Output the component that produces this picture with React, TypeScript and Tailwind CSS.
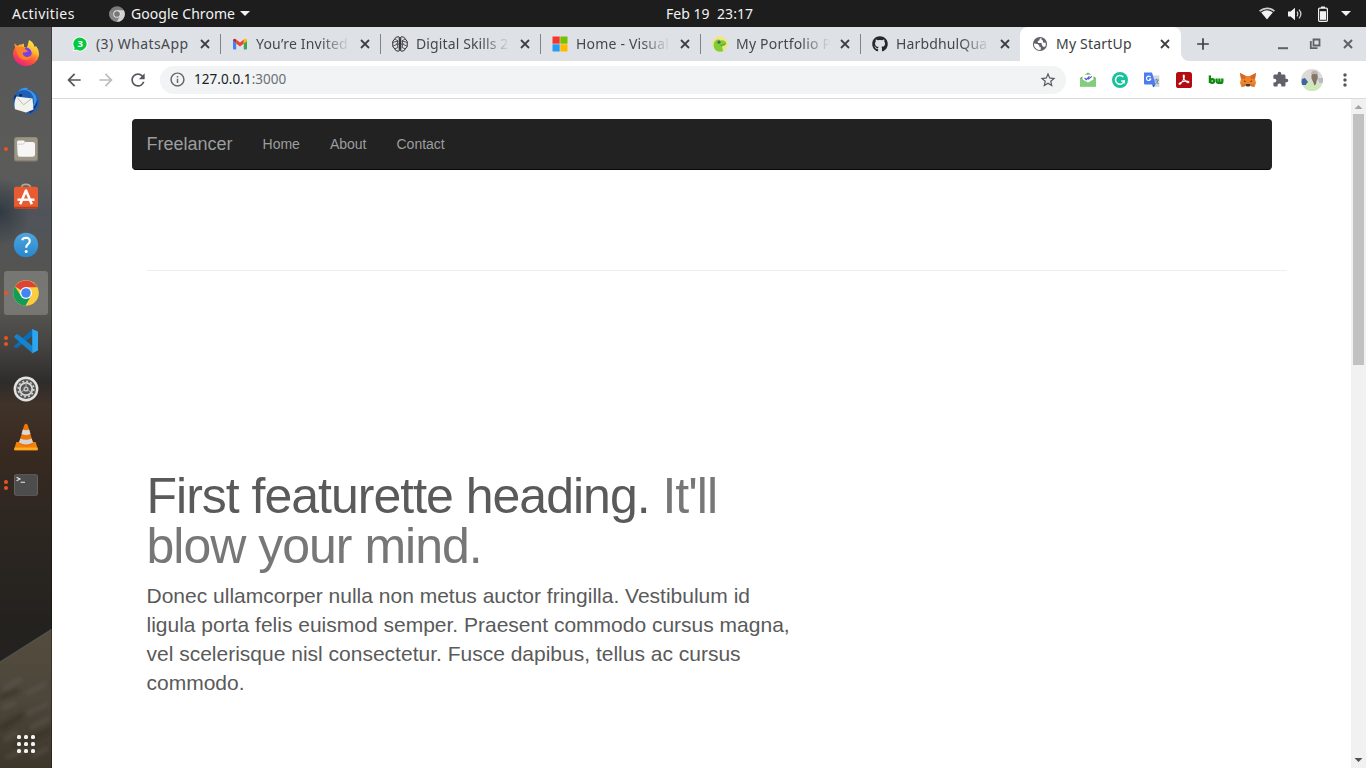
import type { ReactNode } from "react";
import {
  MdArrowBack,
  MdArrowForward,
  MdRefresh,
  MdInfoOutline,
  MdStarBorder,
  MdExtension,
  MdMoreVert,
  MdAdd,
} from "react-icons/md";
import { FaGithub } from "react-icons/fa";

const svg = "block shrink-0";

function ChromeMark({ size }: { size: number }) {
  return (
    <svg className={svg} width={size} height={size} viewBox="0 0 26 26">
      <circle cx="13" cy="13" r="12.8" fill="#fdcd40" />
      <path d="M13 13L2 6.5A12.8 12.8 0 0 1 24.1 7.2L13 7.2Z" fill="#dc4437" />
      <path d="M2 6.5L8 16L18 16L12.4 25.8A12.8 12.8 0 0 1 2 6.5Z" fill="#109d58" />
      <circle cx="13" cy="13" r="6" fill="#fff" />
      <circle cx="13" cy="13" r="4.8" fill="#4285f4" />
    </svg>
  );
}

function ChromeSymbolic() {
  return (
    <svg className={svg} width="16" height="16" viewBox="0 0 26 26">
      <circle cx="13" cy="13" r="12.6" fill="#7b7b7b" />
      <path d="M13 7H24.2A12.6 12.6 0 0 1 12.4 25.6L18.6 15.6Z" fill="#d2d2d2" />
      <path d="M2 6.8L8 15.6L17 16L12.4 25.6A12.6 12.6 0 0 1 2 6.8Z" fill="#868686" />
      <circle cx="13" cy="13" r="6.2" fill="#e4e4e4" />
      <circle cx="13" cy="13" r="4.6" fill="#777" />
    </svg>
  );
}

function CloseMark() {
  return (
    <svg className="ml-[8px] block shrink-0" width="10" height="10" viewBox="0 0 10 10">
      <path d="M1 1L9 9M9 1L1 9" fill="none" stroke="#3c4043" strokeWidth="1.8" />
    </svg>
  );
}

function Firefox() {
  return (
    <svg className={svg} width="28" height="28" viewBox="0 0 28 28">
      <defs>
        <linearGradient id="ff" x1=".8" y1="0" x2=".25" y2="1">
          <stop offset="0" stopColor="#fff44f" />
          <stop offset=".35" stopColor="#ffb62e" />
          <stop offset=".62" stopColor="#ff5a35" />
          <stop offset="1" stopColor="#e9178b" />
        </linearGradient>
      </defs>
      <path
        d="M2.4 4.2L5.6 7Q7 5.4 9.6 5.6L12 4.4L12 7.8L15 9L17 1Q21.6 3.2 22.6 8L24 7Q27.8 12 26.8 17A13 12.4 0 0 1 1.2 17Q.4 12 3 9Z"
        fill="url(#ff)"
      />
      <circle cx="14.3" cy="14" r="5.4" fill="#7542e5" />
      <path d="M4 9Q8 7 12 8L14 11Q16 11.7 15.6 12.8Q13 13.6 11 13.4Q10 16 14 18Q18 18.5 20 15Q19.6 21 14 21Q7 21 5 14Z" fill="#ff812b" />
      <path d="M14 8Q18.8 8 20 13.5Q20.6 10 18.6 7Z" fill="#ffc23e" />
    </svg>
  );
}

function Thunderbird() {
  return (
    <svg className={svg} width="28" height="28" viewBox="0 0 28 28">
      <path d="M1 14Q1 9 5 5Q9 0 16 1Q17 2 15 2.6Q24 3 27 11Q28.6 18 25.5 22Q22 27.5 14 27.4Q16 26 16 24L3 21Q1 18 1 14Z" fill="#1f5fb4" />
      <path d="M6 5Q11 1 18 5Q22 9 22 15L20 22Q26 17 24 9Q20 3 15 2.6L16 1Q9 0 6 5Z" fill="#3f92df" />
      <path d="M25.5 13Q26 21 18 26.4L17 24L23 18Z" fill="#17347d" />
      <path d="M4.5 9.6L20.5 11.5L21.5 22.4L14 25.4L3 22.2Q1.4 16 4.5 9.6Z" fill="#f3f3ee" />
      <path d="M5.5 11L11.6 17.8L19.2 12" fill="none" stroke="#bcbcb8" strokeWidth="1" />
      <circle cx="8.6" cy="8.3" r="1.4" fill="#102a57" />
      <path d="M5 8L1.5 13L2.6 8.4Z" fill="#1a2440" />
    </svg>
  );
}

function Files() {
  return (
    <svg className={svg} width="26" height="26" viewBox="0 0 26 26">
      <rect x="1" y="1" width="24" height="24.4" rx="2.5" fill="#857f6f" />
      <rect x="1.8" y="1.6" width="22.4" height="22.6" rx="2" fill="#9c9686" />
      <path d="M4 6.2Q4 4.6 5.5 4.6H10Q11.6 4.6 11.8 6H19.5Q22 6 22 8V18.5Q22 20.7 19.5 20.7H7Q4.6 20.7 4.6 18.5Z" fill="#f7f6f4" />
      <path d="M4.4 8.2H9.4Q11.2 8.2 12 6.2" fill="none" stroke="#cdc9c1" strokeWidth=".9" />
    </svg>
  );
}

function Software() {
  return (
    <svg className="-mt-[2px] block shrink-0" width="26" height="28" viewBox="0 0 26 28">
      <path d="M8.5 6Q8.5 2.4 13 2.4Q17.5 2.4 17.5 6" fill="none" stroke="#b9a78f" strokeWidth="1.6" />
      <rect x="1" y="4.8" width="24" height="21.6" rx="2" fill="#e95b30" />
      <rect x="1" y="24.8" width="24" height="1.6" rx=".8" fill="#b83e18" />
      <path d="M7.2 22.2L13 8.5L18.8 22.2" fill="none" stroke="#fff" strokeWidth="2.6" strokeLinejoin="round" />
      <path d="M4.5 17.7H21.5" stroke="#fff" strokeWidth="2.4" />
    </svg>
  );
}

function Help() {
  return (
    <svg className={svg} width="26" height="26" viewBox="0 0 26 26">
      <defs>
        <linearGradient id="help" x1="0" y1="0" x2="0" y2="1">
          <stop offset="0" stopColor="#4fa6df" />
          <stop offset="1" stopColor="#2786cc" />
        </linearGradient>
      </defs>
      <circle cx="13" cy="13" r="12.2" fill="url(#help)" />
      <path d="M9.2 8.2Q9.8 5.8 13 5.8Q16.8 6 16.8 9Q16.8 11 14.8 12.4Q13.2 13.6 13.2 15.8" fill="none" stroke="#fff" strokeWidth="2.1" />
      <circle cx="13.2" cy="19.4" r="1.5" fill="#fff" />
    </svg>
  );
}

function Code() {
  return (
    <svg className={svg} width="26" height="26" viewBox="0 0 26 26">
      <path d="M1.2 17.7L19.2 1.2V8L4 19.9Q2.6 20.4 1.2 18.8Z" fill="#0b6db5" />
      <path d="M1.2 8.2L3.6 6.2Q4.3 6 5 6.6L19.2 17.8V25L1.2 9.2Z" fill="#1484ce" />
      <path d="M18.6.8L25 3.6V22.4L18.6 25.4Q19.2 25 19.2 24V2.2Q19.2 1.2 18.6.8Z" fill="#2aa7f0" />
    </svg>
  );
}

function Settings() {
  return (
    <svg className={svg} width="26" height="26" viewBox="0 0 26 26">
      <circle cx="13" cy="13" r="12.4" fill="#e3e3e2" />
      <circle cx="13" cy="13" r="10" fill="#545454" />
      <circle cx="13" cy="13" r="7.8" fill="none" stroke="#cfcfcf" strokeWidth="1.6" strokeDasharray="2 2.08" />
      <circle cx="13" cy="13" r="6.2" fill="none" stroke="#d8d8d8" strokeWidth="1.8" />
      <circle cx="13" cy="13" r="2.6" fill="#c4c4c4" />
      <path d="M13 7V11M7.8 16L11 14.2M18.2 16L15 14.2" stroke="#a4a4a4" strokeWidth="1.2" />
      <circle cx="13" cy="13" r="1.1" fill="#555" />
    </svg>
  );
}

function Vlc() {
  return (
    <svg className={svg} width="26" height="28" viewBox="0 0 26 28">
      <path d="M3.4 19H22.6L25 26.5Q25 27.5 24 27.5H2Q1 27.5 1 26.5Z" fill="#f08109" />
      <path d="M1.4 24.6H24.6V26.8H1.4Z" fill="#ffae27" />
      <path d="M11.3 2Q13 -.4 14.7 2L20.4 21Q13 25.8 5.6 21Z" fill="#ef7507" />
      <path d="M9.8 6.5Q13 8 16.2 6.5L17.5 11Q13 13 8.5 11Z" fill="#d9d9d9" />
      <path d="M7.3 15.5Q13 18.2 18.7 15.5L20 19.6Q13 23.6 6 19.6Z" fill="#d4d4d4" />
    </svg>
  );
}

function Terminal() {
  return (
    <svg className={svg} width="26" height="26" viewBox="0 0 26 26">
      <rect x="1" y="2.2" width="24" height="21.6" rx="2.4" fill="#656565" />
      <rect x="1.9" y="3.1" width="22.2" height="19.8" rx="1.6" fill="#4d4d4d" />
      <path d="M3.6 5.2L7 7L3.6 8.8M7.6 10.2H12" fill="none" stroke="#e9e9e9" strokeWidth="1.1" />
    </svg>
  );
}

const dock: { icon: ReactNode; dots: number; active?: boolean }[] = [
  { icon: <Firefox />, dots: 0 },
  { icon: <Thunderbird />, dots: 0 },
  { icon: <Files />, dots: 1 },
  { icon: <Software />, dots: 0 },
  { icon: <Help />, dots: 0 },
  { icon: <ChromeMark size={26} />, dots: 1, active: true },
  { icon: <Code />, dots: 2 },
  { icon: <Settings />, dots: 0 },
  { icon: <Vlc />, dots: 0 },
  { icon: <Terminal />, dots: 2 },
];

function DockBackdrop() {
  return (
    <svg className="absolute inset-0" width="52" height="741" viewBox="0 27 52 741" preserveAspectRatio="none">
      <defs>
        <linearGradient id="wall" x1="0" y1="0" x2="0" y2="1">
          <stop offset="0" stopColor="#585858" />
          <stop offset=".2" stopColor="#5b5b5a" />
          <stop offset=".25" stopColor="#50545a" />
          <stop offset=".31" stopColor="#535453" />
          <stop offset=".38" stopColor="#575550" />
          <stop offset=".43" stopColor="#454442" />
          <stop offset=".48" stopColor="#2e2c2a" />
          <stop offset=".51" stopColor="#40332a" />
          <stop offset=".57" stopColor="#382a20" />
          <stop offset=".66" stopColor="#2e2721" />
          <stop offset=".8" stopColor="#24221f" />
          <stop offset="1" stopColor="#222" />
        </linearGradient>
        <linearGradient id="road" x1="0" y1="0" x2="0" y2="1">
          <stop offset="0" stopColor="#544d3e" />
          <stop offset=".5" stopColor="#4c463b" />
          <stop offset="1" stopColor="#3d362b" />
        </linearGradient>
        <radialGradient id="shade">
          <stop offset="0" stopColor="#27323a" stopOpacity=".75" />
          <stop offset="1" stopColor="#27323a" stopOpacity="0" />
        </radialGradient>
        <filter id="soft">
          <feGaussianBlur stdDeviation="2" />
        </filter>
      </defs>
      <rect y="27" width="52" height="741" fill="url(#wall)" />
      <ellipse cx="0" cy="212" rx="30" ry="34" fill="url(#shade)" />
      <path d="M0 662L52 629V768H0Z" fill="url(#road)" />
      <path d="M0 662L52 629" stroke="#5f5e59" strokeWidth="1.2" opacity=".6" />
      <g filter="url(#soft)">
        <path d="M4 688L22 679M26 694L46 684M2 708L16 703M22 716L48 704M4 740L18 732M30 728L50 718M6 758L24 750M32 757L48 748" stroke="#6a6763" strokeWidth="3" opacity=".5" />
        <path d="M0 729L26 713M14 747L50 730M0 698L18 690" stroke="#2f281f" strokeWidth="4" opacity=".6" />
      </g>
      <rect x="51" y="27" width="1" height="741" fill="#000" opacity=".3" />
    </svg>
  );
}

function Dock() {
  return (
    <aside className="relative w-[52px] shrink-0 overflow-hidden bg-[#444]">
      <DockBackdrop />
      <div className="relative flex h-full flex-col pt-[2px]">
        {dock.map((d, i) => (
          <div key={i} className="relative flex h-12 items-center justify-center">
            <div
              className={
                d.active
                  ? "flex h-11 w-11 items-center justify-center rounded-[3px] bg-white/20"
                  : "flex h-11 w-11 items-center justify-center"
              }
            >
              {d.icon}
            </div>
            <div className="absolute left-1 flex h-full flex-col justify-center gap-[2px]">
              {Array.from({ length: d.dots }, (_, k) => (
                <span key={k} className="h-1 w-1 rounded-full bg-[#e95420]" />
              ))}
            </div>
          </div>
        ))}
        <div className="mt-auto mb-[15px] grid grid-cols-3 gap-[3px] self-center">
          {Array.from({ length: 9 }, (_, k) => (
            <span key={k} className="h-1 w-1 rounded-[1.5px] bg-[#f2f2f0]" />
          ))}
        </div>
      </div>
    </aside>
  );
}

function TopBar() {
  return (
    <header className="relative flex h-[27px] shrink-0 items-center justify-between bg-[#1d1d1d] pl-3 pr-[15px] text-[14px] text-[#f2f2f2]">
      <div className="flex items-center">
        <span className="w-[97px] tracking-[0.45px]">Activities</span>
        <ChromeSymbolic />
        <span className="ml-[6px] w-[105px] whitespace-nowrap tracking-[0.05px]">Google Chrome</span>
        <svg className="ml-1" width="10" height="5" viewBox="0 0 10 5">
          <path d="M0 0H10L5 5Z" fill="#f2f2f2" />
        </svg>
      </div>
      <div className="flex items-center">
        <svg className={svg} width="16" height="13" viewBox="0 0 16 13">
          <path d="M0 3.4Q8 -2.6 16 3.4L14.9 4.8Q8 -.2 1.1 4.8Z" fill="#d0d0d0" />
          <path d="M2.2 5.4Q8 1 13.8 5.4L8 12.4Z" fill="#f2f2f2" />
        </svg>
        <svg className="ml-[13px]" width="15" height="14" viewBox="0 0 15 14">
          <path d="M0 4.6H2.6L7 .8V13.2L2.6 9.4H0Z" fill="#f2f2f2" />
          <path d="M9 4.6Q10.6 7 9 9.4M11 2.6Q14.8 7 11 11.4" fill="none" stroke="#d8d8d8" strokeWidth="1.2" />
        </svg>
        <svg className="ml-[15px]" width="10" height="16" viewBox="0 0 10 16">
          <path d="M3 .5H7V2H3Z" fill="#f2f2f2" />
          <rect x=".6" y="2.1" width="8.8" height="13.2" rx="1" fill="none" stroke="#f2f2f2" strokeWidth="1.2" />
          <rect x="2" y="5.2" width="6" height="8.6" fill="#f2f2f2" />
        </svg>
        <svg className="ml-[13px]" width="10" height="5" viewBox="0 0 10 5">
          <path d="M0 0H10L5 5Z" fill="#f2f2f2" />
        </svg>
      </div>
      <div className="pointer-events-none absolute inset-x-0 left-[53px] flex justify-center">
        <span className="whitespace-pre tracking-[0.05px]">{"Feb 19  23:17"}</span>
      </div>
    </header>
  );
}

const favicons = {
  whatsapp: (
    <svg className={svg} width="16" height="16" viewBox="0 0 16 16">
      <path d="M8 .5A7.5 7.5 0 1 1 4.4 14.6L.6 15.6L1.7 12A7.5 7.5 0 0 1 8 .5Z" fill="#fff" />
      <path d="M8 1.4A6.6 6.6 0 1 1 4.5 13.6L2 14.3L2.7 12A6.6 6.6 0 0 1 8 1.4Z" fill="#05c93f" />
      <text x="8.1" y="11.4" fontSize="9.5" fontWeight="700" fill="#fff" textAnchor="middle">3</text>
    </svg>
  ),
  gmail: (
    <svg className={svg} width="16" height="16" viewBox="0 0 16 16">
      <path d="M1 4V12.6Q1 13.6 2 13.6H4.2V6.6Z" fill="#4285f4" />
      <path d="M15 4V12.6Q15 13.6 14 13.6H11.8V6.6Z" fill="#34a853" />
      <path d="M1 4.4L4.2 6.8V3.6Q1.4 1.6 1 4.4Z" fill="#c5221f" />
      <path d="M4.2 3.6L8 6.5L11.8 3.6V7.6L8 10.6L4.2 7.6Z" fill="#ea4335" />
      <path d="M11.8 3.6V7.6L15 5.2V4Q14.4 1.6 11.8 3.6Z" fill="#fbbc04" />
    </svg>
  ),
  brain: (
    <svg className={svg} width="16" height="16" viewBox="0 0 16 16" fill="none" stroke="#2b2d30" strokeWidth="1">
      <path d="M6.2 1H9.8V15H6.2Z" fill="#a5a7aa" stroke="none" />
      <path d="M6.4 .8Q4 .3 2.8 2.8L.7 5.6L.8 10.4L2.8 13Q4 15.7 6.4 15.2Q7.6 15 7.6 13.6V2.4Q7.6 1 6.4 .8Z" />
      <path d="M9.6 .8Q12 .3 13.2 2.8L15.3 5.6L15.2 10.4L13.2 13Q12 15.7 9.6 15.2Q8.4 15 8.4 13.6V2.4Q8.4 1 9.6 .8Z" />
      <path d="M2.8 2.8L6 5L.8 6.4M6 5L5 8L.8 10.4M5 8H7.6M5 8L6 11.4L2.8 13M13.2 2.8L10 5L15.2 6.4M10 5L11 8L15.2 10.4M11 8H8.4M11 8L10 11.4L13.2 13" strokeWidth=".8" />
    </svg>
  ),
  microsoft: (
    <svg className={svg} width="16" height="16" viewBox="0 0 16 16">
      <path d="M.5 .5H7.7V7.7H.5Z" fill="#f5362a" />
      <path d="M8.3 .5H15.5V7.7H8.3Z" fill="#78c000" />
      <path d="M.5 8.3H7.7V15.5H.5Z" fill="#289cf5" />
      <path d="M8.3 8.3H15.5V15.5H8.3Z" fill="#ffb900" />
    </svg>
  ),
  portfolio: (
    <svg className={svg} width="16" height="16" viewBox="0 0 16 16">
      <circle cx="8" cy="8" r="7.9" fill="#f1e487" />
      <path d="M3.6 4.6Q6 2.6 8.6 4.4Q13.4 3.8 14.2 7.4Q13.8 9.8 10.4 10Q10 13 11.4 15Q8 16.4 4.8 15Q1.8 13 1.6 9Q1.8 6 3.6 4.6Z" fill="#7fce35" />
      <circle cx="7" cy="6.2" r="1.6" fill="#456c58" />
      <path d="M8.5 9.4Q11 9.6 13.4 7.8" fill="none" stroke="#4c9633" strokeWidth=".9" />
    </svg>
  ),
  github: <FaGithub size={16} className="shrink-0 text-[#24292e]" />,
  globe: (
    <svg className={svg} width="16" height="16" viewBox="0 0 16 16">
      <circle cx="8" cy="8" r="7.1" fill="#5f6368" />
      <path d="M9.4 2Q7 2.4 7.4 4.2L5.6 5.2L6 7H9.6V8.6L11 10.8H13.2Q14.2 8.8 13.6 6.8L11 6.4V4.6L9.6 4Z" fill="#fff" />
      <path d="M1.9 7.6L5.6 8L7.4 9.8V11.2H9L8.6 13.8Q5 14.6 3 11.6Q1.9 10 1.9 7.6Z" fill="#fff" />
    </svg>
  ),
};

const titleBase = "ml-2 -mt-px block w-[96px] overflow-hidden whitespace-nowrap";
const titleFade =
  "ml-2 -mt-px block w-[96px] overflow-hidden whitespace-nowrap [mask-image:linear-gradient(to_right,#000_68%,transparent_98%)]";

const tabs = [
  { icon: favicons.whatsapp, title: "(3) WhatsApp", fit: true, track: "tracking-[0.42px]" },
  { icon: favicons.gmail, title: "You’re Invited:", fit: false, track: "tracking-[0.2px]" },
  { icon: favicons.brain, title: "Digital Skills 2", fit: false, track: "tracking-[0.12px]" },
  { icon: favicons.microsoft, title: "Home - Visual", fit: false, track: "tracking-[0.2px]" },
  { icon: favicons.portfolio, title: "My Portfolio P", fit: false, track: "tracking-[0.2px]" },
  { icon: favicons.github, title: "HarbdhulQua", fit: false, track: "tracking-[0.15px]" },
];

function TabStrip() {
  return (
    <div className="flex h-[34px] shrink-0 items-stretch bg-[#dee1e6] pl-2 text-[14px] text-[#45494d]">
      {tabs.map((t, i) => (
        <div key={t.title} className="relative flex w-[160px] items-center pl-3">
          {t.icon}
          <span className={(t.fit ? titleBase : titleFade) + " " + t.track}>{t.title}</span>
          <CloseMark />
          {i < 5 && <span className="absolute right-[-1px] top-[7px] h-5 w-px bg-[#80848a]" />}
        </div>
      ))}
      <div className="flex w-[161px] bg-[#dee1e6]">
        <div className="flex flex-1 items-center rounded-t-lg bg-white pl-3 text-[#3c4043]">
          {favicons.globe}
          <span className="ml-2 -mt-px w-[96px] whitespace-nowrap tracking-[0.2px]">My StartUp</span>
          <CloseMark />
        </div>
      </div>
      <div className="flex-1 bg-white">
        <div className="flex h-full items-center justify-between rounded-bl-lg bg-[#dee1e6] pl-3 pr-3">
          <MdAdd size={20} className="text-[#3c4043]" />
          <svg className={svg} width="76" height="12" viewBox="0 0 76 12" fill="none" stroke="#5f6368">
            <path d="M0 10.2H10" strokeWidth="2" />
            <path d="M35.5 1.5H41.5V7.5H35.5Z" strokeWidth="1.8" />
            <path d="M32.8 3V10.2H39.5" strokeWidth="1.8" />
            <path d="M66 2L74 10M74 2L66 10" strokeWidth="2" />
          </svg>
        </div>
      </div>
    </div>
  );
}

const extensions = [
  <svg className={svg} width="16" height="16" viewBox="0 0 16 16">
    <path d="M0 6L8 .6L16 6V14.4H0Z" fill="#58b857" />
    <path d="M2.4 2.6H13.6V11H2.4Z" fill="#fff" />
    <path d="M0 6L8 10.6L16 6V14.4H0Z" fill="#80cf7b" />
    <path d="M4.6 5.8L6.3 7.6L9.4 4.4M8 7.4L11.8 4.4" fill="none" stroke="#5742c8" strokeWidth="1.1" />
  </svg>,
  <svg className={svg} width="16" height="16" viewBox="0 0 16 16">
    <circle cx="8" cy="8" r="8" fill="#15c39a" />
    <path d="M11.3 5A4.4 4.4 0 1 0 12.2 8.9H9.2" fill="none" stroke="#fff" strokeWidth="1.5" />
    <path d="M12.3 8.4V11.4" stroke="#fff" strokeWidth="1.3" />
  </svg>,
  <svg className={svg} width="16" height="16" viewBox="0 0 16 16">
    <path d="M6 3.4H15.4V15H9Z" fill="#d5d9df" />
    <path d="M0 .4H8L11.6 12.4H1Q0 12.4 0 11.4Z" fill="#4c7df0" />
    <path d="M8 12.4H11.6L9.4 15.6Z" fill="#3555c8" />
    <path d="M6.6 5.2A2.2 2.2 0 1 0 6.8 7H5" fill="none" stroke="#fff" strokeWidth="1.1" />
    <path d="M10.4 8H15M12.6 6.8V8M14.2 8.2Q13.4 10.5 11.4 12M11.8 9.2Q12.8 11 14.8 12" fill="none" stroke="#5e7f93" strokeWidth=".9" />
  </svg>,
  <svg className={svg} width="16" height="16" viewBox="0 0 16 16">
    <rect width="16" height="16" rx="2.6" fill="#b30b10" />
    <path d="M7.4 3.2Q8.8 2.8 8.2 5.6Q7.4 8.8 4.4 12Q2.8 12.8 3.2 11.4Q4.8 9.8 8.6 9.2Q12 8.8 12.9 9.8Q13 11 11.4 10.6Q8.6 9.2 7.5 5.8Q7 4 7.4 3.2Z" fill="none" stroke="#fff" strokeWidth="1.1" />
  </svg>,
  <svg className={svg} width="16" height="16" viewBox="0 0 16 16" fill="none" stroke="#0b8a0b" strokeWidth="2.3">
    <path d="M1.9 3.4V11" />
    <circle cx="4.2" cy="9" r="1.9" />
    <path d="M8.6 6.4V9.4Q8.8 10.9 10.1 10.9Q11.4 10.9 11.4 9.4V6.4M11.4 9.4Q11.6 10.9 12.9 10.9Q14.3 10.9 14.3 9.4V6.4" />
  </svg>,
  <svg className={svg} width="16" height="16" viewBox="0 0 16 16">
    <path d="M0 1L6 4H10L16 1L15 7L16 11L14.5 15L10.5 14H5.5L1.5 15L0 11L1 7Z" fill="#ee842a" />
    <path d="M0 1L6 4L5 7L1 7Z" fill="#d8672a" />
    <path d="M16 1L10 4L11 7L15 7Z" fill="#d8672a" />
    <path d="M5.6 12L6.5 14.5H9.5L10.4 12Z" fill="#3c3a40" />
    <path d="M4 8.2L6.2 9.6L4.4 9.8ZM12 8.2L9.8 9.6L11.6 9.8Z" fill="#2e2c30" />
    <path d="M2 12L5 11.4L5.6 14L1.6 15ZM14 12L11 11.4L10.4 14L14.4 15Z" fill="#dd7528" />
  </svg>,
  <MdExtension size={17} className="shrink-0 text-[#5f6368]" />,
];

function Avatar() {
  return (
    <svg className={svg} width="22" height="22" viewBox="0 0 22 22">
      <defs>
        <clipPath id="face">
          <circle cx="11" cy="11" r="11" />
        </clipPath>
      </defs>
      <g clipPath="url(#face)">
        <rect width="22" height="22" fill="#dcdad6" />
        <path d="M1 10L4 9L7 13L5 16H0Z" fill="#41659d" />
        <path d="M17 9H22V14H18Z" fill="#b6bbc4" />
        <path d="M3 22Q4 13 10.5 12L14 16L17 12.5Q20 14 20 22Z" fill="#cfe8bb" />
        <ellipse cx="13.6" cy="8" rx="3.2" ry="5" fill="#86766a" />
        <path d="M10 5.6Q10 1.4 13.6 1.4Q17 1.6 17.2 5.6Q13.6 4.4 10 5.6Z" fill="#b9b4ae" />
        <path d="M11.8 12H15.4L15 15L13.6 16.4Z" fill="#7d6b5e" />
      </g>
    </svg>
  );
}

function Toolbar() {
  return (
    <div className="flex h-[38px] shrink-0 items-center border-b border-[#d9dbde] bg-white pl-3 pr-3">
      <MdArrowBack size={20} className="shrink-0 text-[#54585d]" />
      <MdArrowForward size={20} className="ml-3 shrink-0 text-[#babcbe]" />
      <MdRefresh size={20} className="ml-3 shrink-0 text-[#54585d]" />
      <div className="ml-3 flex h-7 w-[906px] shrink-0 items-center justify-between rounded-full bg-[#f1f3f4] pl-[9px] pr-[9px]">
        <div className="flex items-center">
          <MdInfoOutline size={17} className="text-[#5f6368]" />
          <span className="ml-2 text-[13.5px] tracking-[0.05px] text-[#202124]">
            127.0.0.1<span className="text-[#6b6f74]">:3000</span>
          </span>
        </div>
        <MdStarBorder size={18} className="text-[#54585d]" />
      </div>
      <div className="ml-[14px] flex flex-1 items-center gap-4">
        {extensions.map((e, i) => (
          <span key={i} className="flex w-4 justify-center">
            {e}
          </span>
        ))}
        <span className="-ml-[3px] flex">
          <Avatar />
        </span>
      </div>
      <MdMoreVert size={20} className="-mr-px shrink-0 text-[#54585d]" />
    </div>
  );
}

function Page() {
  return (
    <main className="flex-1 bg-white pl-20 pt-5 [font-family:'Liberation_Sans',Arial,sans-serif]">
      <nav className="flex h-[51px] w-[1140px] items-center rounded border border-[#222] border-b-[#080808] bg-[#222] pl-[13.5px] text-[14px] text-[#9d9d9d]">
        <span className="text-[18px]">Freelancer</span>
        <span className="ml-[30px]">Home</span>
        <span className="ml-[30px]">About</span>
        <span className="ml-[30px]">Contact</span>
      </nav>
      <div className="pl-[14.5px]">
        <hr className="mt-[100px] w-[1140px] border-t border-[#eee]" />
        <section className="mt-[200px] w-[652px] text-[#5a5a5a]">
          <h2 className="mb-[10px] text-[50px] leading-[50px] tracking-[-1px]">
            First featurette heading. <span className="text-[#777]">It'll blow your mind.</span>
          </h2>
          <p className="text-[21px] leading-[29px]">
            Donec ullamcorper nulla non metus auctor fringilla. Vestibulum id ligula porta felis euismod
            semper. Praesent commodo cursus magna, vel scelerisque nisl consectetur. Fusce dapibus, tellus
            ac cursus commodo.
          </p>
        </section>
      </div>
    </main>
  );
}

function Scrollbar() {
  return (
    <div className="flex w-[15px] shrink-0 flex-col items-center bg-[#f1f1f1]">
      <svg className={svg} width="15" height="15" viewBox="0 0 15 15">
        <path d="M3.5 10H11.5L7.5 6Z" fill="#a3a3a3" />
      </svg>
      <div className="h-[251px] w-[11px] bg-[#c1c1c1]" />
      <svg className="mt-auto block" width="15" height="15" viewBox="0 0 15 15">
        <path d="M3.5 5H11.5L7.5 9Z" fill="#505050" />
      </svg>
    </div>
  );
}

export default function App() {
  return (
    <div className="flex h-[768px] w-[1366px] flex-col overflow-hidden bg-white [font-family:'Noto_Sans','Open_Sans',sans-serif]">
      <TopBar />
      <div className="flex min-h-0 flex-1">
        <Dock />
        <div className="flex min-w-0 flex-1 flex-col">
          <TabStrip />
          <Toolbar />
          <div className="flex min-h-0 flex-1">
            <Page />
            <Scrollbar />
          </div>
        </div>
      </div>
    </div>
  );
}
